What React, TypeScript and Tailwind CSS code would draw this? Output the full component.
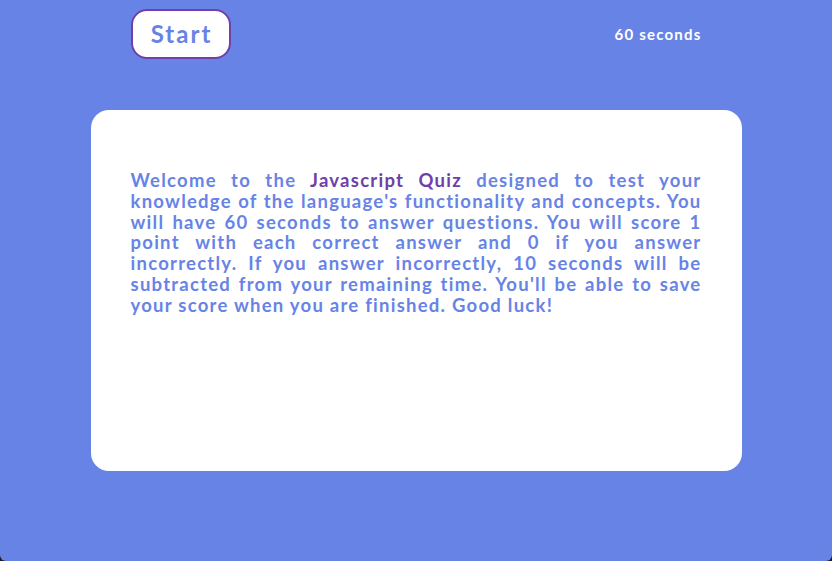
const lines: React.ReactNode[] = [
  <>
    Welcome to the <span className="text-[#7040a8]">Javascript Quiz</span> designed to test your
  </>,
  "knowledge of the language's functionality and concepts. You",
  'will have 60 seconds to answer questions. You will score 1',
  'point with each correct answer and 0 if you answer',
  'incorrectly. If you answer incorrectly, 10 seconds will be',
  "subtracted from your remaining time. You'll be able to save",
]

export default function App() {
  return (
    <div className="h-[561px] w-[832px] bg-[#1c1c1c]">
      <div
        className="flex h-full w-full flex-col items-center rounded-b-[6px] bg-[#6883e6]"
        style={{ fontFamily: 'Lato, "Open Sans", sans-serif' }}
      >
        <header className="flex w-[571px] items-center justify-between pt-[9px]">
          <button className="h-[50px] w-[100px] rounded-[16px] border-2 border-[#7040a8] bg-white pl-[2px] text-[24px] font-bold tracking-[2px] text-[#6883e6]">
            Start
          </button>
          <span className="text-[15px] font-bold tracking-[1.2px] text-white">60 seconds</span>
        </header>

        <main className="mt-[51px] h-[361px] w-[651px] rounded-[18px] bg-white px-[40px] pt-[60px]">
          <div className="text-[18.5px] font-bold leading-[20.8px] tracking-[1.25px] text-[#6883e6]">
            {lines.map((line, i) => (
              <p key={i} className="text-justify [text-align-last:justify]">
                {line}
              </p>
            ))}
            <p>your score when you are finished. Good luck!</p>
          </div>
        </main>
      </div>
    </div>
  )
}
